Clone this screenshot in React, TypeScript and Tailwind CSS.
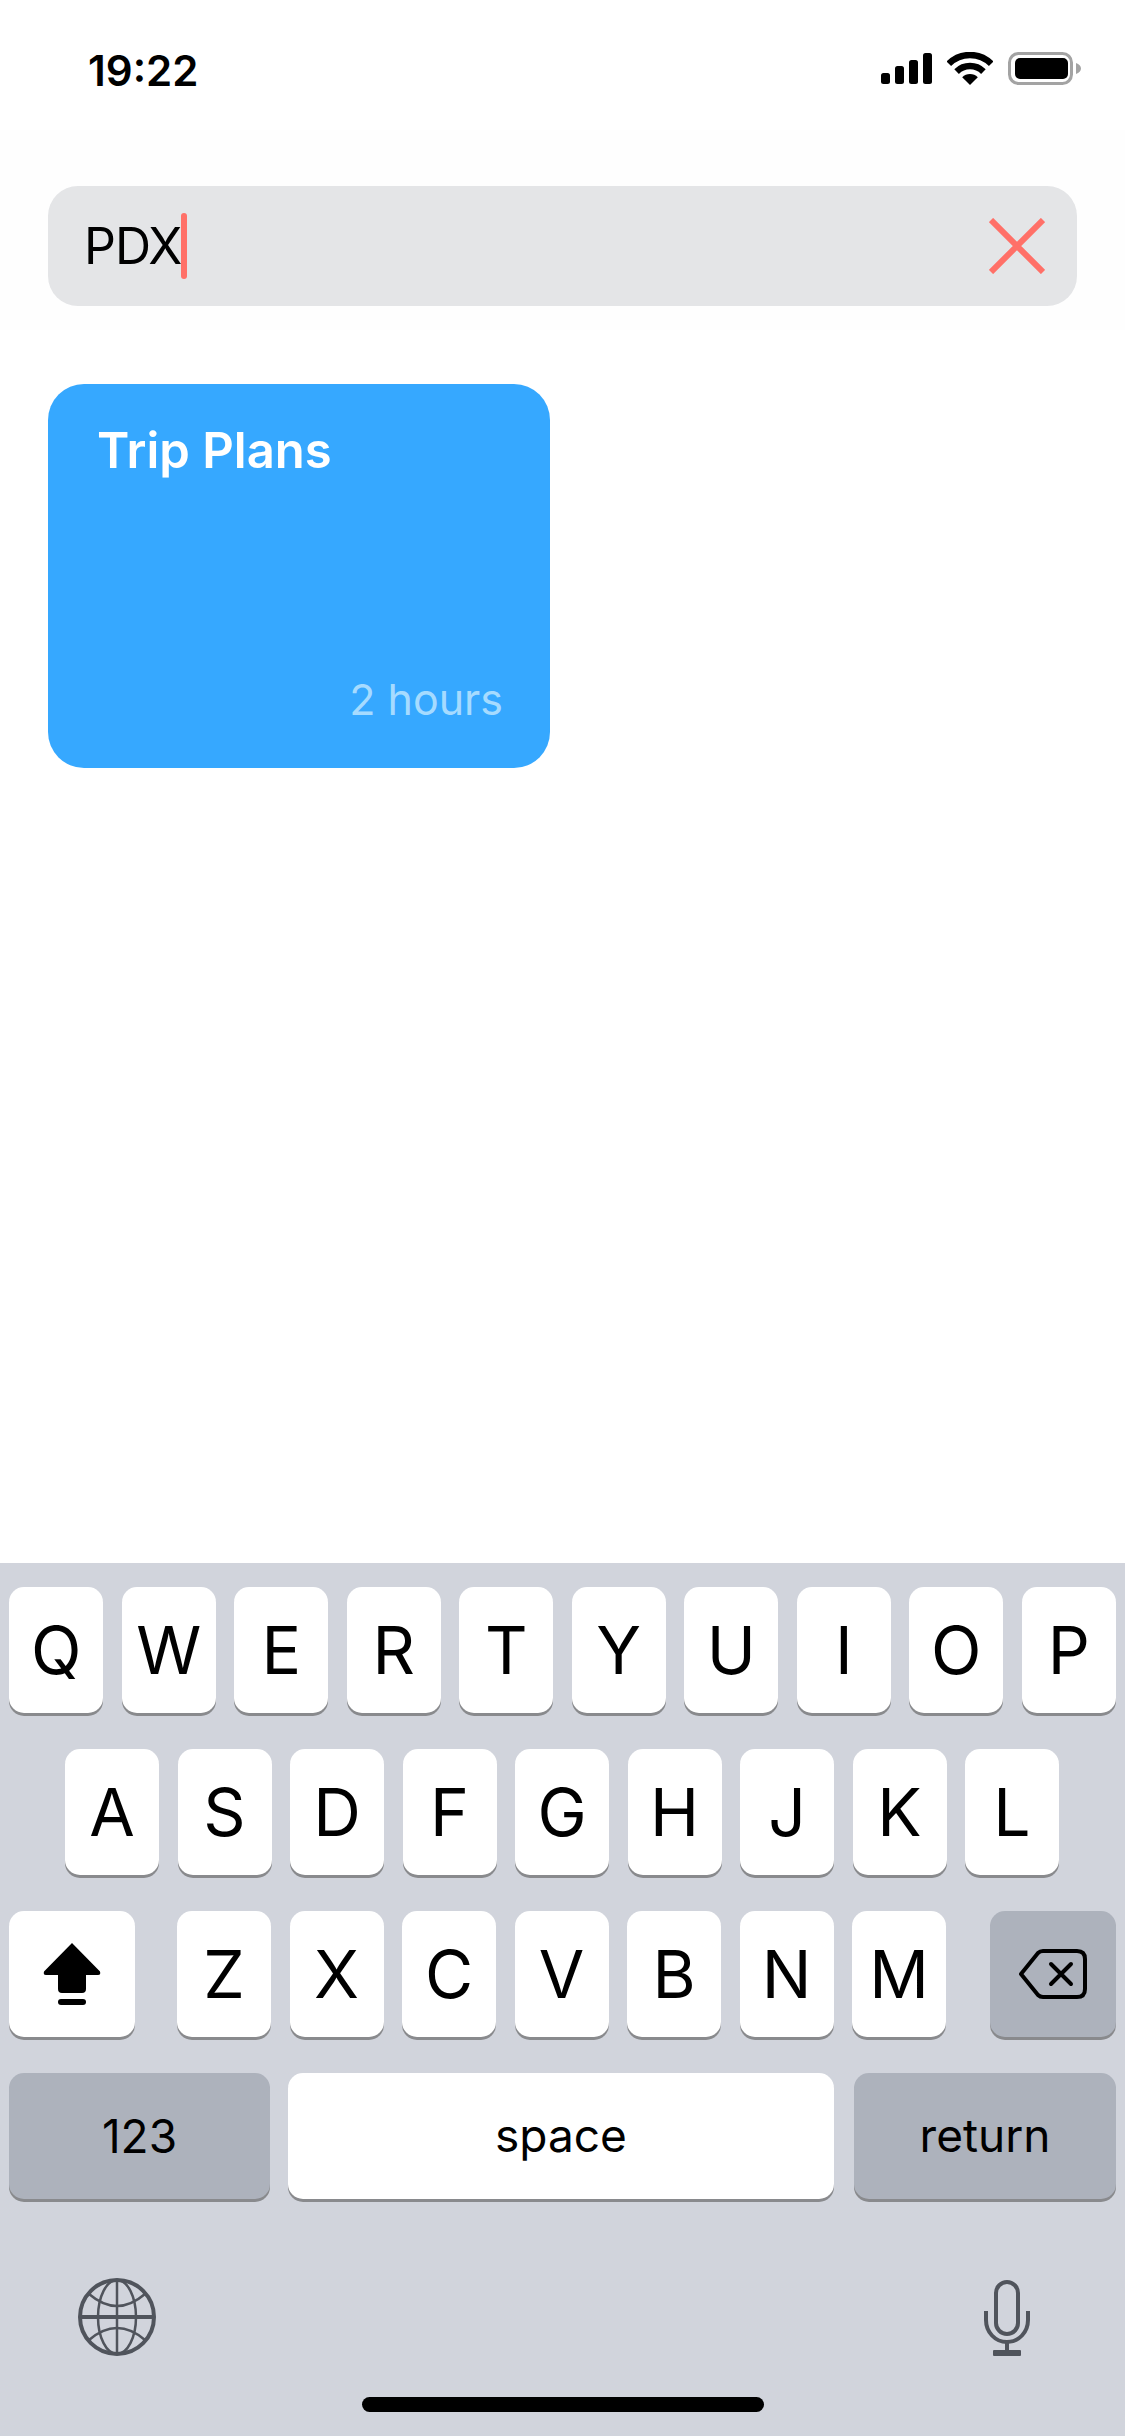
import React from "react";

const row1 = ["Q", "W", "E", "R", "T", "Y", "U", "I", "O", "P"];
const row2 = ["A", "S", "D", "F", "G", "H", "J", "K", "L"];
const row3 = ["Z", "X", "C", "V", "B", "N", "M"];

function Key({ label }: { label: string }) {
  return (
    <div className="w-[94px] h-[126px] rounded-[15px] bg-white shadow-[0_3px_0_#898a8d] flex items-center justify-center text-[66px] leading-none font-normal text-black">
      {label}
    </div>
  );
}

function Signal() {
  return (
    <svg width="51" height="31" viewBox="0 0 51 31" fill="#000">
      <rect x="0" y="20" width="9" height="11" rx="2.5" />
      <rect x="14" y="13" width="9" height="18" rx="2.5" />
      <rect x="28" y="7" width="9" height="24" rx="2.5" />
      <rect x="42" y="0" width="9" height="31" rx="2.5" />
    </svg>
  );
}

function Wifi() {
  return (
    <svg width="46" height="33" viewBox="0 0 46 33" fill="none">
      <path d="M1.8 11.8A30 30 0 0 1 44.2 11.8" stroke="#000" strokeWidth="6.5" />
      <path d="M9.6 19.6A19 19 0 0 1 36.4 19.6" stroke="#000" strokeWidth="6.5" />
      <path d="M23 33L15.2 25.2A11 11 0 0 1 30.8 25.2Z" fill="#000" />
    </svg>
  );
}

function Battery() {
  return (
    <svg width="73" height="33" viewBox="0 0 73 33">
      <rect x="1.5" y="1.5" width="62" height="30" rx="9" fill="none" stroke="#a3a3a3" strokeWidth="3" />
      <rect x="7" y="6" width="53" height="21" rx="5" fill="#000" />
      <path d="M68 11C71 12 73 14 73 16.5C73 19 71 21 68 22Z" fill="#a3a3a3" />
    </svg>
  );
}

function Shift() {
  return (
    <svg width="58" height="63" viewBox="0 0 58 63" fill="#000">
      <path d="M29 0L57 28.5Q58 32 55 32H43V46Q43 50 39 50H19Q15 50 15 46V32H3Q0 32 1 28.5Z" />
      <rect x="15" y="56" width="28" height="6" rx="3" />
    </svg>
  );
}

function Backspace() {
  return (
    <svg width="68" height="50" viewBox="0 0 68 50" fill="none" stroke="#000" strokeWidth="4" strokeLinecap="round" strokeLinejoin="round">
      <path d="M24 2H58Q66 2 66 10V40Q66 48 58 48H24Q21 48 19 46L2 25L19 4Q21 2 24 2Z" />
      <path d="M32 15L52 35M52 15L32 35" />
    </svg>
  );
}

function Globe() {
  return (
    <svg width="78" height="78" viewBox="0 0 78 78" fill="none" stroke="#50545c">
      <circle cx="39" cy="39" r="37" strokeWidth="4" />
      <path d="M2 39H76" strokeWidth="4" />
      <path d="M39 2V76" strokeWidth="2.5" />
      <ellipse cx="39" cy="39" rx="19" ry="37" strokeWidth="2.5" />
      <path d="M11 16Q39 40 67 16" strokeWidth="2.5" />
      <path d="M11 62Q39 38 67 62" strokeWidth="2.5" />
    </svg>
  );
}

function Mic() {
  return (
    <svg width="46" height="76" viewBox="0 0 46 76" fill="none" stroke="#50545c">
      <rect x="12" y="2" width="22" height="52" rx="11" strokeWidth="4" />
      <path d="M2 31V40C2 52 11 62 23 62C35 62 44 52 44 40V31" strokeWidth="4" />
      <path d="M23 62V72" strokeWidth="4" />
      <rect x="9" y="70" width="28" height="6" rx="1" fill="#50545c" stroke="none" />
    </svg>
  );
}

export default function App() {
  return (
    <div className="w-[1125px] h-[2436px] flex flex-col bg-white font-['Inter',sans-serif] text-black overflow-hidden">
      {/* Status bar */}
      <div className="h-[130px] flex items-start justify-between pl-[88px] pr-[44px] pt-[47px]">
        <span className="text-[42px] leading-[48px] font-semibold">19:22</span>
        <div className="flex items-start gap-[15px] pt-[5px]">
          <div className="pt-[1px]">
            <Signal />
          </div>
          <Wifi />
          <Battery />
        </div>
      </div>

      {/* Search */}
      <div className="h-[200px] bg-[#fefefe] px-[48px] pt-[56px]">
        <div className="h-[120px] rounded-[30px] bg-[#e4e5e7] flex items-center justify-between pl-[36px] pr-[32px]">
          <div className="flex items-center">
            <span className="text-[50px] leading-none font-normal tracking-[-1px]">PDX</span>
            <div className="w-[6px] h-[66px] rounded-full bg-[#ff7068]" />
          </div>
          <svg width="56" height="56" viewBox="0 0 56 56" fill="none" stroke="#ff7068" strokeWidth="6">
            <path d="M2 2L54 54M54 2L2 54" />
          </svg>
        </div>
      </div>

      {/* Card */}
      <div className="flex-1 px-[48px] pt-[54px]">
        <div className="w-[502px] h-[384px] rounded-[36px] bg-[#36a8ff] flex flex-col justify-between pl-[49px] pr-[47px] pt-[37px] pb-[42px]">
          <span className="text-[49px] leading-[60px] font-semibold text-white">Trip Plans</span>
          <span className="self-end text-[43px] leading-[54px] font-normal text-[#a6dbff]">2 hours</span>
        </div>
      </div>

      {/* Keyboard */}
      <div className="h-[873px] bg-[#d1d4dc] flex flex-col pt-[24px] relative">
        <div className="flex justify-center gap-[18.5px]">
          {row1.map((k) => (
            <Key key={k} label={k} />
          ))}
        </div>
        <div className="flex justify-center gap-[18.5px] mt-[36px] pr-[1px]">
          {row2.map((k) => (
            <Key key={k} label={k} />
          ))}
        </div>
        <div className="flex items-center px-[9px] mt-[36px]">
          <div className="w-[126px] h-[126px] rounded-[15px] bg-white shadow-[0_3px_0_#898a8d] flex items-center justify-center">
            <Shift />
          </div>
          <div className="flex gap-[18.5px] ml-[42px]">
            {row3.map((k) => (
              <Key key={k} label={k} />
            ))}
          </div>
          <div className="w-[126px] h-[126px] ml-auto rounded-[15px] bg-[#adb2bc] shadow-[0_3px_0_#898a8d] flex items-center justify-center">
            <Backspace />
          </div>
        </div>
        <div className="flex px-[9px] mt-[36px] pr-[9px]">
          <div className="w-[261px] h-[126px] rounded-[15px] bg-[#adb2bc] shadow-[0_3px_0_#898a8d] flex items-center justify-center text-[46px] leading-none font-normal">
            123
          </div>
          <div className="w-[546px] h-[126px] ml-[18px] rounded-[15px] bg-white shadow-[0_3px_0_#898a8d] flex items-center justify-center text-[46px] leading-none font-normal pb-[2px]">
            space
          </div>
          <div className="w-[262px] h-[126px] ml-[20px] rounded-[15px] bg-[#adb2bc] shadow-[0_3px_0_#898a8d] flex items-center justify-center text-[46px] leading-none font-normal pb-[2px]">
            return
          </div>
        </div>
        <div className="flex justify-between items-start pl-[78px] pr-[95px] mt-[79px]">
          <Globe />
          <div className="pt-[2px]">
            <Mic />
          </div>
        </div>
        <div className="absolute left-[362px] top-[834px] w-[402px] h-[15px] rounded-full bg-black" />
      </div>
    </div>
  );
}
